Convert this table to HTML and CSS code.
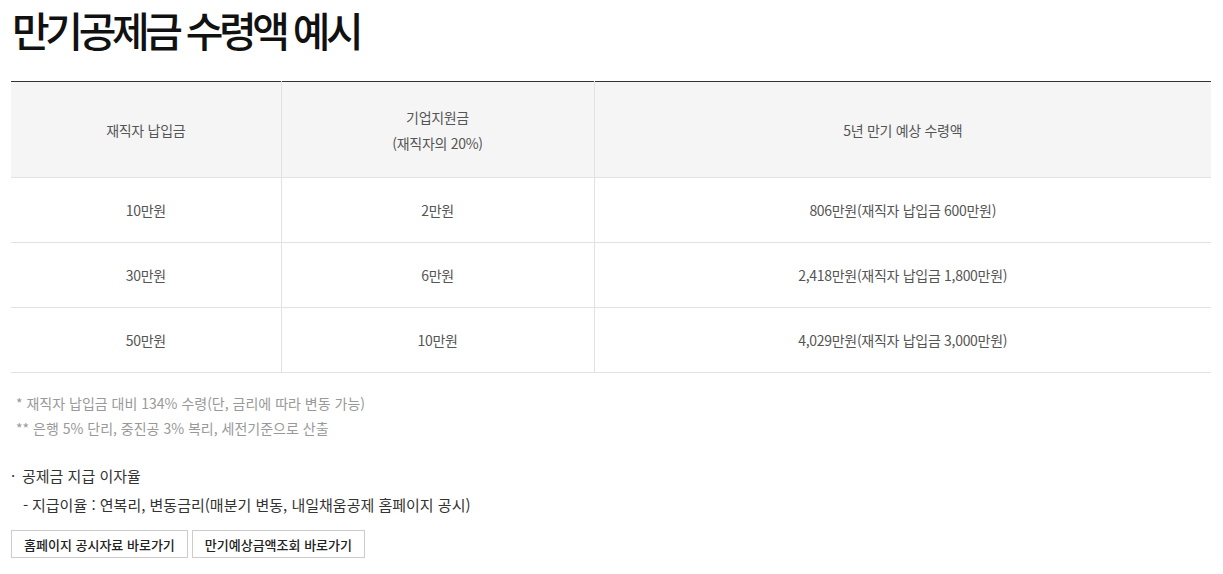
FILE: index.html
```html
<!DOCTYPE html>
<html lang="ko">
<head>
<meta charset="utf-8">
<link rel="stylesheet" href="styles.css">
</head>
<body>
<div class="page">
  <h1 class="title">만기공제금 수령액 예시</h1>
  <table class="tbl">
    <colgroup>
      <col class="c1"><col class="c2"><col class="c3">
    </colgroup>
    <thead>
      <tr>
        <th>재직자 납입금</th>
        <th>기업지원금<br>(재직자의 20%)</th>
        <th>5년 만기 예상 수령액</th>
      </tr>
    </thead>
    <tbody>
      <tr><td>10만원</td><td>2만원</td><td>806만원(재직자 납입금 600만원)</td></tr>
      <tr><td>30만원</td><td>6만원</td><td>2,418만원(재직자 납입금 1,800만원)</td></tr>
      <tr><td>50만원</td><td>10만원</td><td>4,029만원(재직자 납입금 3,000만원)</td></tr>
    </tbody>
  </table>
  <div class="notes">
    <p>* 재직자 납입금 대비 134% 수령(단, 금리에 따라 변동 가능)</p>
    <p>** 은행 5% 단리, 중진공 3% 복리, 세전기준으로 산출</p>
  </div>
  <div class="rate">
    <p class="rate-title"><span class="dot">·</span>공제금 지급 이자율</p>
    <p class="rate-desc"><span class="dash">-</span>지급이율 : 연복리, 변동금리(매분기 변동, 내일채움공제 홈페이지 공시)</p>
  </div>
  <div class="btns">
    <a class="btn" href="#">홈페이지 공시자료 바로가기</a>
    <a class="btn" href="#">만기예상금액조회 바로가기</a>
  </div>
</div>
</body>
</html>
```

FILE: styles.css
```css
* { box-sizing: border-box; }
html, body { margin: 0; padding: 0; background: #fff; }
body {
  font-family: "Noto Sans CJK KR", "Noto Sans", sans-serif;
  color: #333;
}
.page {
  width: 1200px;
  margin-left: 11px;
}
.title {
  margin: 0;
  font-size: 41px;
  line-height: 58px;
  font-weight: 500;
  letter-spacing: -4.4px;
  color: #111;
  padding-left: 1px;
  height: 81px;
}
.tbl {
  width: 1200px;
  border-collapse: collapse;
  border-top: 1px solid #333;
  font-size: 14px;
  letter-spacing: -0.3px;
  color: #555;
}
.c1 { width: 270px; }
.c2 { width: 313px; }
.c3 { width: 617px; }
.tbl th {
  background: #f5f5f5;
  font-weight: 400;
  height: 96px;
  line-height: 26px;
  border-bottom: 1px solid #e2e2e2;
  border-right: 1px solid #e2e2e2;
  padding: 0;
  text-align: center;
}
.tbl td {
  height: 65px;
  text-align: center;
  border-bottom: 1px solid #e2e2e2;
  border-right: 1px solid #e2e2e2;
  padding: 0;
}
.tbl th:last-child, .tbl td:last-child { border-right: 0; }
.notes {
  margin-top: 18px;
  padding-left: 5px;
  font-size: 14px;
  color: #999;
  line-height: 25px;
}
.notes p { margin: 0; }
.rate {
  margin-top: 22px;
  font-size: 15px;
  color: #333;
}
.rate p { margin: 0; }
.rate-title { line-height: 25px; }
.rate-desc { line-height: 25px; margin-top: 4px !important; padding-left: 12px !important; }
.dot { display: inline-block; width: 11px; }
.dash { display: inline-block; width: 9px; }
.btns {
  display: flex;
  gap: 4px;
  margin-top: 13px;
}
.btn {
  display: inline-flex;
  align-items: center;
  height: 28px;
  padding: 0 12px 0 12px;
  border: 1px solid #ccc;
  font-size: 13px;
  color: #222;
  text-decoration: none;
  font-weight: 500;
}
```
